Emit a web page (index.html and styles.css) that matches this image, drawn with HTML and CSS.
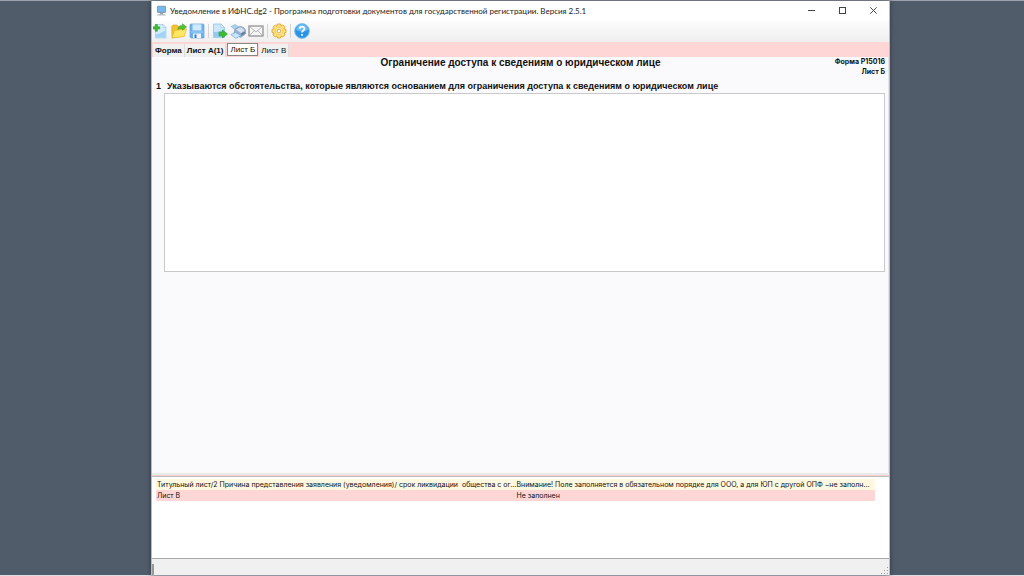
FILE: index.html
```html
<!DOCTYPE html>
<html lang="ru">
<head>
<meta charset="utf-8">
<meta name="viewport" content="width=device-width, initial-scale=1">
<title>Уведомление в ИФНС.dg2</title>
<link rel="stylesheet" href="styles.css">
</head>
<body>
<div class="desktop">
<main class="window">
  <header class="titlebar">
    <svg class="app-icon" viewBox="0 0 11 11" aria-hidden="true"><rect x="1" y=".7" width="9" height="7.3" rx="1" fill="#8f9daa"/><rect x="2" y="1.7" width="7" height="5.2" fill="#70baf0"/><path d="M4 8h3v1H4z" fill="#9aa5b0"/><path d="M2 9h7l1 1.5H1z" fill="#b9c1c9"/></svg>
    <h1 class="window-title">Уведомление в ИФНС.dg2 - Программа подготовки документов для государственной регистрации. Версия 2.5.1</h1>
    <div class="window-controls">
      <button type="button" aria-label="Свернуть"><svg viewBox="0 0 7 7"><path d="M0 3.5h7"/></svg></button>
      <button type="button" aria-label="Развернуть"><svg viewBox="0 0 7 7"><rect x=".5" y=".5" width="6" height="6"/></svg></button>
      <button type="button" aria-label="Закрыть"><svg viewBox="0 0 7 7"><path d="M.3.3l6.4 6.4M6.7.3L.3 6.7"/></svg></button>
    </div>
  </header>

  <div class="toolbar" role="toolbar" aria-label="Инструменты">
    <button type="button" aria-label="Создать"><svg viewBox="0 0 16 16"><path d="M2.500 1.500h7.500l3 3V15H2.500z" fill="#d3ebfc" stroke="#9fcaea" stroke-width=".7"/><path d="M3 11c4 0 7-2 9.600-4v7.600H3z" fill="#9fd3f8"/><path d="M10 1.500v3h3z" fill="#fff" stroke="#8fc0e6" stroke-width=".6"/><path d="M2.200 1.500h2.200v2.300h2.300V6H4.400v2.300H2.200V6H0V3.800h2.200z" fill="#3dbd2c" stroke="#2b9b29" stroke-width=".5"/></svg></button>
    <button type="button" aria-label="Открыть"><svg viewBox="0 0 16 16"><path d="M.7 3.500L2 2h4l1.300 1.500H13V13L1 15z" fill="#f3c22d" stroke="#d8a522" stroke-width=".6"/><path d="M3.500 7.500l12-1.500-2.200 7.500L1 15z" fill="#ffe763" stroke="#dfb12c" stroke-width=".6"/><path d="M7 6.500C7 3.500 9 2.300 11.500 2.400V.7L15.600 4l-4.100 3.300V5.500C9.500 5.300 8 5.500 7 6.500z" fill="#55c22f" stroke="#2e9a24" stroke-width=".5"/></svg></button>
    <button type="button" aria-label="Сохранить"><svg viewBox="0 0 16 16"><path d="M1 2q0-1 1-1h12q1 0 1 1v13H2l-1-1z" fill="#6bb0ee" stroke="#6aa5dc" stroke-width=".7"/><path d="M3.500 1.300h9V7.500h-9z" fill="#cfe9fd"/><path d="M2 8.500h12v1H2z" fill="#a5d3f8"/><path d="M4 10.500h8V15H4z" fill="#eef4fa"/><path d="M5.500 11.500h2V15h-2z" fill="#347bbd"/></svg></button>
    <span class="separator"></span>
    <button type="button" aria-label="Экспорт"><svg viewBox="0 0 16 16"><path d="M1.500 1h7.500l3.500 3.500V14.500h-11z" fill="#cde8fc" stroke="#8bbde4" stroke-width=".7"/><path d="M2 9c4 0 7-1 10-3v8H2z" fill="#91cbf5"/><path d="M9 1v3.500h3.500z" fill="#fff" stroke="#8bbde4" stroke-width=".6"/><path d="M7 9.200h3.500V7L15.500 11l-5 4v-2.200H7z" fill="#3ebd33" stroke="#2a982a" stroke-width=".6"/></svg></button>
    <button type="button" aria-label="Печать"><svg viewBox="0 0 16 16"><path d="M1 3.500L5 1.500l5 3-4 3z" fill="#a6d2f8" stroke="#8caecf" stroke-width=".6"/><path d="M5 6l5-2.500q5 .5 5.500 4v3.500l-5 3.500L4 10z" fill="#9db3cc" stroke="#7f9aba" stroke-width=".7"/><path d="M6 6.500l4-2q3.500.5 4.500 3L11 10z" fill="#d3e0ee"/><path d="M.8 11.500l5-2 5 3-5 3z" fill="#c9e4fc" stroke="#6ea5db" stroke-width=".7"/><path d="M11 10.500l4-2v2L11 13z" fill="#587ea8"/></svg></button>
    <button type="button" aria-label="Отправить"><svg viewBox="0 0 16 16"><rect x="1" y="3" width="14" height="10" fill="#f5f5f5" stroke="#8a8a8a" stroke-width="1.200"/><path d="M1.300 3.300L8 9l6.700-5.700M1.500 12.500l4.800-5M14.500 12.500L9.700 7.500" fill="none" stroke="#aaa" stroke-width=".8"/></svg></button>
    <span class="separator"></span>
    <button type="button" aria-label="Настройки"><svg viewBox="0 0 16 16"><path d="M6.500 1h3l.5 2 1.800-1L14 4.200l-1 1.800 2 .5v3l-2 .5 1 1.800-2.200 2.200-1.800-1-.5 2h-3L6 13l-1.800 1L2 11.800 3 10l-2-.5v-3L3 6 2 4.200 4.200 2 6 3z" fill="#ffe07a" stroke="#e0ac38" stroke-width="1"/><circle cx="8" cy="8" r="3.700" fill="#fff0b4" stroke="#efc558" stroke-width=".8"/><circle cx="8" cy="8" r="1.900" fill="#fff" stroke="#d9a22d" stroke-width=".9"/></svg></button>
    <span class="separator"></span>
    <button type="button" aria-label="Справка"><svg viewBox="0 0 16 16"><circle cx="8" cy="8" r="7.400" fill="#2993e5" stroke="#8cc3ec"/><path d="M2 7a6 6 0 0 1 12 0q-6 3-12 0z" fill="#64bcf5"/><path d="M5.700 6C5.700 2.900 10.500 3 10.500 5.800 10.500 7.500 8 7.600 8 9.500M8 11v1.700" fill="none" stroke="#fff" stroke-width="1.700"/></svg></button>
  </div>

  <nav class="tabs" role="tablist" aria-label="Листы">
    <button type="button" class="tab tab-filled" role="tab">Форма</button>
    <button type="button" class="tab tab-filled" role="tab">Лист А(1)</button>
    <button type="button" class="tab tab-active" role="tab" aria-selected="true">Лист Б</button>
    <button type="button" class="tab" role="tab">Лист В</button>
  </nav>

  <section class="sheet">
    <div class="sheet-head">
      <h2 class="sheet-title">Ограничение доступа к сведениям о юридическом лице</h2>
      <p class="form-code">Форма Р15016<br>Лист Б</p>
    </div>
    <label class="field-label" for="reason"><span class="field-number">1</span>Указываются обстоятельства, которые являются основанием для ограничения доступа к сведениям о юридическом лице</label>
    <textarea class="reason" id="reason"></textarea>
  </section>

  <div class="splitter"></div>

  <section class="messages" aria-label="Сообщения">
    <table class="message-table">
      <tbody>
        <tr class="warning"><td>Титульный лист/2 Причина представления заявления (уведомления)/ срок ликвидации&nbsp; общества с ог...</td><td>Внимание! Поле заполняется в обязательном порядке для ООО, а для ЮП с другой ОПФ −не заполн...</td></tr>
        <tr class="error"><td>Лист В</td><td>Не заполнен</td></tr>
      </tbody>
    </table>
  </section>

  <footer class="statusbar">
    <span class="status-mark"></span>
    <svg class="grip" viewBox="0 0 8 8" aria-hidden="true"><path d="M6 0h1v1H6zM3 3h1v1H3zM6 3h1v1H6zM0 6h1v1H0zM3 6h1v1H3zM6 6h1v1H6z" fill="#999"/></svg>
  </footer>
</main>
</div>
</body>
</html>
```
FILE: styles.css
```css
* { box-sizing: border-box; }

body {
  margin: 0;
  color: #111;
  font-family: "Liberation Sans", Arial, sans-serif;
  font-size: 8px;
}

h1, h2, p { margin: 0; }

button {
  margin: 0;
  padding: 0;
  border: 0;
  background: none;
  font: inherit;
  color: inherit;
}

svg { display: block; }

.desktop {
  display: grid;
  grid-template-columns: 151fr 739fr 134fr;
  min-height: 100vh;
  background: #515c6a;
  border-top: 1px solid #9da3ad;
  border-bottom: 1px solid #dcdfe5;
}

.window {
  grid-column: 2;
  display: flex;
  flex-direction: column;
  min-width: 0;
  background: #f0f0f0;
  border-left: 1px solid #b9bdc3;
  border-right: 1px solid #b9bdc3;
  box-shadow: 0 0 5px #303a46;
}

.titlebar {
  display: flex;
  align-items: center;
  gap: 3px;
  height: 19px;
  padding-left: 4px;
  background: #fff;
}

.app-icon { width: 11px; height: 11px; }

.window-title {
  flex: 1;
  min-width: 0;
  white-space: nowrap;
  font: 400 8px/12px Lato, "Noto Sans", sans-serif;
  color: #222;
}

.window-controls { display: flex; }

.window-controls button {
  display: grid;
  place-items: center;
  width: 31px;
  height: 19px;
}

.window-controls svg {
  width: 7px;
  height: 7px;
  fill: none;
  stroke: #444;
}

.toolbar {
  display: flex;
  align-items: center;
  gap: 2px;
  height: 22px;
  padding-left: 1px;
  background: linear-gradient(#fcfcfc, #efefef);
}

.toolbar svg { width: 16px; height: 16px; }

.separator {
  width: 1px;
  height: 14px;
  margin: 0 1px;
  background: #d4d4d4;
}

.tabs {
  display: flex;
  align-items: flex-end;
  height: 15px;
  padding-left: 1px;
  background: #ffd6d6;
}

.tab {
  height: 13px;
  padding: 0 2px;
  background: #f0f0f0;
  border-right: 1px solid #ddd;
  line-height: 13px;
}

.tab-filled { font-weight: 700; }

.tab-active {
  align-self: flex-start;
  margin: 1px 1px 0;
  background: #fff;
  border: 1px solid #888;
  line-height: 11px;
}

.sheet {
  flex: 1;
  padding: 0 3px 4px 4px;
  background: #fafafd;
  border-right: 1px solid #e5e5e8;
}

.sheet-head {
  display: grid;
  grid-template-columns: 1fr auto 1fr;
  height: 23px;
}

.sheet-title {
  grid-column: 2;
  font-size: 10px;
  line-height: 12px;
}

.form-code {
  text-align: right;
  font: 700 7px/10px Inter, sans-serif;
}

.field-label {
  display: flex;
  height: 13px;
  font-size: 9px;
  line-height: 12px;
  font-weight: 700;
}

.field-number { width: 11px; }

.reason {
  display: block;
  width: calc(100% - 8px);
  height: 179px;
  margin-left: 8px;
  background: #fff;
  border: 1px solid #c9c9cd;
  resize: none;
}

.splitter {
  height: 3px;
  background: #e9e9e9;
  border-bottom: 1px solid #ffcfcf;
}

.messages {
  height: 83px;
  padding: 2px 14px 0 4px;
  background: #fff;
  border-top: 1px solid #bcbcbc;
  border-bottom: 1px solid #aaa;
}

.message-table {
  width: 100%;
  table-layout: fixed;
  border-collapse: collapse;
  font: 400 7px/11px Inter, sans-serif;
}

.message-table td {
  height: 11px;
  padding: 0 1px;
  white-space: nowrap;
}

.warning { background: #fff8e1; }
.error { background: #ffd6d6; }

.statusbar {
  display: flex;
  align-items: flex-end;
  justify-content: space-between;
  height: 16px;
}

.status-mark {
  width: 2px;
  height: 11px;
  background: #999;
}

.grip { width: 8px; height: 8px; }
```
